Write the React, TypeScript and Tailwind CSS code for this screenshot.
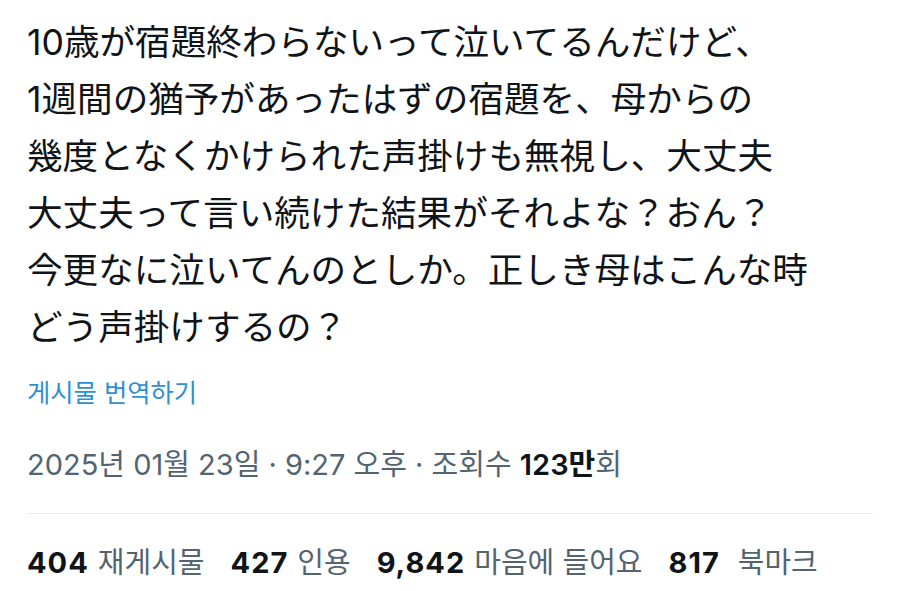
import React from "react";

const lines = [
  "10歳が宿題終わらないって泣いてるんだけど、",
  "1週間の猶予があったはずの宿題を、母からの",
  "幾度となくかけられた声掛けも無視し、大丈夫",
  "大丈夫って言い続けた結果がそれよな？おん？",
  "今更なに泣いてんのとしか。正しき母はこんな時",
  "どう声掛けするの？",
];

const jp = { fontFamily: 'Inter, "Noto Sans CJK JP", sans-serif' };
const kr = { fontFamily: 'Inter, "Noto Sans CJK KR", sans-serif' };

function Stat({ n, label, wide }: { n: string; label: string; wide?: boolean }) {
  return (
    <span className="flex items-baseline">
      <span className="font-bold tracking-[1px] text-[#0f1419]">{n}</span>
      <span className={wide ? "ml-[18px] text-[#536471]" : "ml-[9px] text-[#536471]"}>{label}</span>
    </span>
  );
}

export default function App() {
  return (
    <div className="w-[900px] h-[591px] bg-white overflow-hidden px-[27px]">
      <div className="pt-[14px] text-[35.6px] leading-[57px] text-[#0f1419] whitespace-nowrap" style={jp}>
        {lines.map((l, i) => (
          <div key={i}>{l}</div>
        ))}
      </div>
      <div className="mt-[21px] text-[25.3px] leading-[32px] text-[#2d8fd5]" style={kr}>
        게시물 번역하기
      </div>
      <div className="mt-[38px] text-[29px] leading-[36px] text-[#536471] whitespace-nowrap" style={kr}>
        2025년 01월 23일 · 9:27 오후 · 조회수 <span className="font-semibold text-[#0f1419]">123만</span>회
      </div>
      <div className="mt-[30px] h-px bg-[#e8eaeb]" />
      <div className="mt-[31px] flex items-baseline gap-[26px] text-[29px] leading-[36px] whitespace-nowrap" style={kr}>
        <Stat n="404" label="재게시물" />
        <Stat n="427" label="인용" />
        <Stat n="9,842" label="마음에 들어요" />
        <Stat n="817" label="북마크" wide />
      </div>
    </div>
  );
}
